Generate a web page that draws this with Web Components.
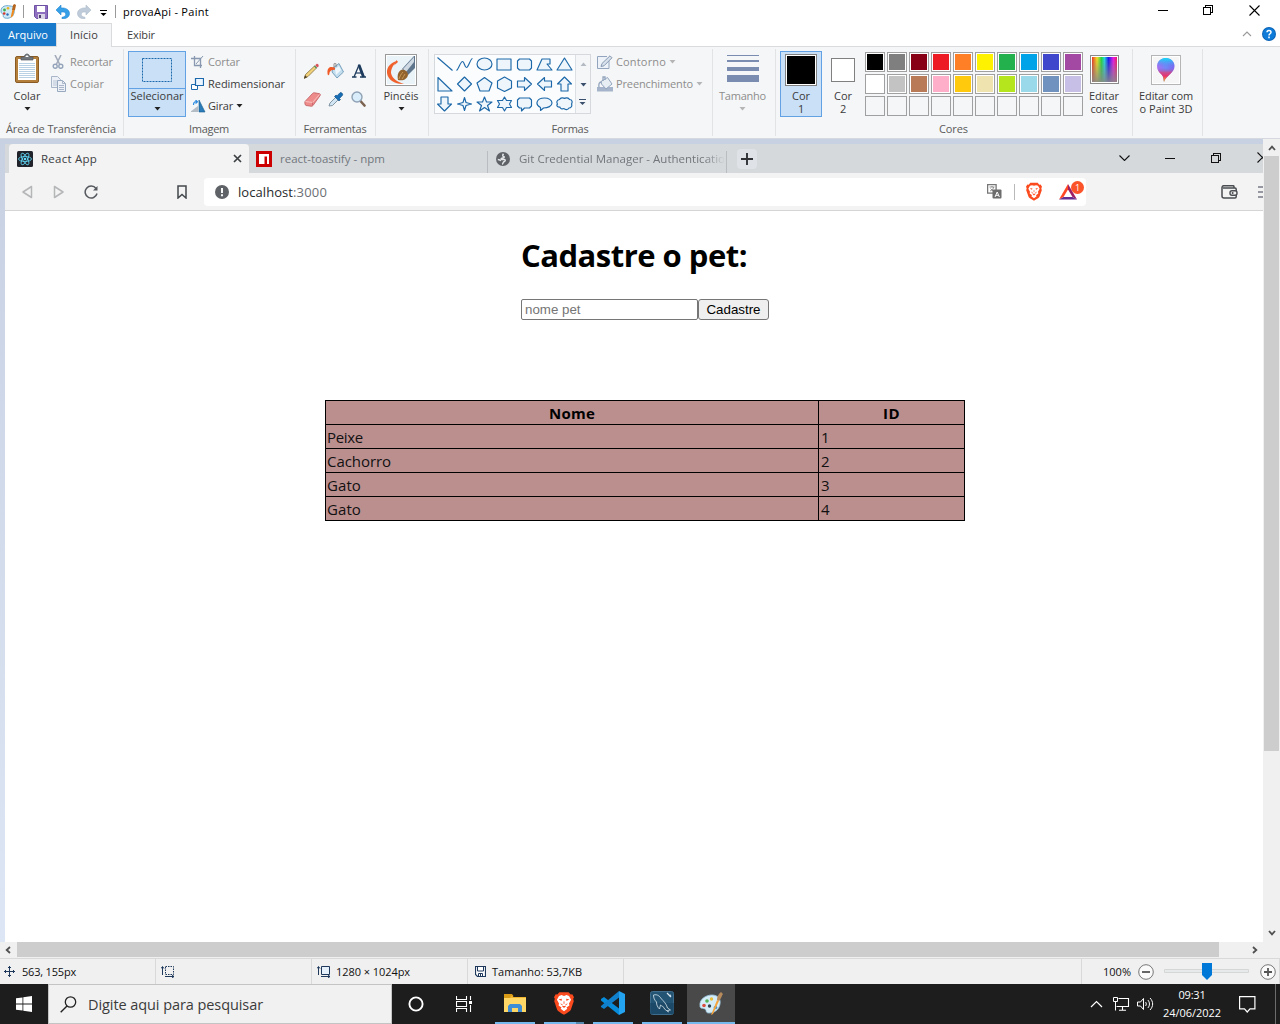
<!DOCTYPE html>
<html lang="pt-BR">
<head>
<meta charset="utf-8">
<title>provaApi - Paint</title>
<style>
html,body{margin:0;height:100%;overflow:hidden;background:#fff}
body{font-family:"Open Sans","Noto Sans",sans-serif;font-size:11px}
</style>
</head>
<body>
<paint-window></paint-window>
<script>
const ICONS = {
palette:[17,18,`<path d="M1 9C1 4 6 3 10 4c4 0 5 3 4 7-1 4-5 6-9 5-3-1-1-3-2-4-1 0-2-1-2-3z" fill="#cfe9f6" stroke="#5fa3c8" stroke-width=".9"/><circle cx="4.5" cy="8" r="1.4" fill="#3fae49"/><circle cx="8" cy="6.3" r="1.3" fill="#e8b21e"/><circle cx="4.2" cy="11.5" r="1.3" fill="#d83a2e"/><circle cx="7.5" cy="12.5" r="1.2" fill="#2f6db5"/><path d="M10.5 16 12.3 8h2.2L13 14z" fill="#f08a1d"/><path d="M12 8l1-5 1.500-1 1.500 1-1 5z" fill="#b5651d"/>`],
save:[14,14,`<path d="M.5.5h13v13H2.500l-2-2z" fill="#8f6fc0" stroke="#6d4fa3"/><path d="M3 1h8v6H3z" fill="#fff"/><path d="M4 9h7v5H4z" fill="#d8d4e6"/><path d="M5 10h2v3H5z" fill="#4d4070"/>`],
undo:[14,14,`<path d="M5 0v3C10 2.500 13.500 5 13.500 8.500c0 3.500-3.500 5.500-7.500 5.300v-1.500c2.500-.3 3.800-1.500 3.800-3.200C9.800 7.300 8 6.800 5 7V10L0 5z" fill="#35a0e8" stroke="#2587d0" stroke-width=".6"/>`],
redo:[14,14,`<path d="M9 0v3C4 2.500.5 5 .5 8.500c0 3.500 3.500 5.500 7.500 5.300v-1.500c-2.500-.3-3.800-1.500-3.800-3.200C4.200 7.300 6 6.800 9 7V10l5-5z" fill="#bfcbd9" stroke="#adbccd" stroke-width=".6"/>`],
custom:[8,8,`<path d="M0 1.500h7" stroke="currentColor"/><path d="M.5 4h6L3.500 7z" fill="currentColor"/>`],
min:[10,11,`<path d="M0 5.500h10" stroke="currentColor"/>`],
restore:[10,10,`<path d="M.5 2.500h7v7h-7zM2.500 2.500v-2h7v7h-2" fill="none" stroke="currentColor" shape-rendering="crispEdges"/>`],
close:[11,11,`<path d="M.5.5l10 10M10.500.5l-10 10" stroke="currentColor" stroke-width="1.1"/>`],
up:[10,6,`<path d="M1 5l4-4 4 4" fill="none" stroke="#999" stroke-width="1.1"/>`],
help:[14,14,`<circle cx="7" cy="7" r="7" fill="#0a63b5"/><circle cx="7" cy="7" r="6" fill="#0f7bd8"/><path d="M5 5.300C5 2.900 9 2.900 9 5.200 9 6.800 7 6.700 7 8.500M7 9.600v1.700" stroke="#fff" stroke-width="1.500" fill="none"/>`],
down:[7,4,`<path d="M.5 0h6L3.500 3.500z" fill="currentColor"/>`],
clip:[28,31,`<rect x="2.500" y="3.500" width="23" height="26" rx="1.500" fill="#b37f3b" stroke="#8a5c24"/><path d="M5 6h18v21H5z" fill="#fff"/><path d="M6 10.500h16M6 12.500h16M6 14.500h16M6 16.500h16M6 18.500h16M6 20.500h16M6 22.500h16M6 24.500h16" stroke="#b9d1e4"/><path d="M8 7V4h3c1-4 5-4 6 0h3v3z" fill="#70777c" stroke="#50575c" stroke-width=".7"/><path d="M12.500 4c0-2 3-2 3 0z" fill="#fff"/>`],
cut:[12,15,`<path d="M3 0l4.500 9M9 0L4.500 9" stroke="#a3acbb" stroke-width="1.600"/><circle cx="3.200" cy="11.300" r="2" fill="none" stroke="#93a3bb" stroke-width="1.400"/><circle cx="8.800" cy="11.300" r="2" fill="none" stroke="#93a3bb" stroke-width="1.400"/>`],
copy:[16,16,`<path d="M.5.5h6l3 3v8h-9z" fill="#edf1f7" stroke="#a9b6c9"/><path d="M2 5h5M2 7h5M2 9h5" stroke="#b9c5d6"/><path d="M6.500 4.500h5l3 3v8h-8z" fill="#edf1f7" stroke="#98a8bf"/><path d="M8 9.500h5M8 11.500h5M8 13.500h5M11.500 4.500v3h3" stroke="#a9b6c9" fill="none"/>`],
sel:[31,25,`<rect x=".5" y=".5" width="29" height="23" fill="none" stroke="#1b68ad" stroke-dasharray="2 1"/>`],
crop:[13,13,`<path d="M3.500 0v9.500H11M0 2.500h9.500V12" stroke="#8798b0" fill="none" stroke-width="1.300"/><path d="M5 8l7-8" stroke="#8798b0"/>`],
resize:[13,13,`<path d="M.5 6.500h6v5h-6z" fill="#fff" stroke="#1b68ad"/><path d="M4.500.5h8v7h-8z" fill="#eaf5ff" stroke="#1b68ad" stroke-width="1.200"/>`],
rotate:[16,13,`<path d="M-1 12h8V6z" fill="#b4bcc5"/><path d="M8 0v12h6z" fill="#2b7cb8" stroke="#165d91" stroke-width=".6"/><path d="M2.500 5c0-3 1.500-3.500 3-3.500M4.500 0L6.500 1.700 4.500 3.500" stroke="#2d8be0" fill="none" stroke-width="1.200"/>`],
pencil:[16,16,`<path d="M0 15.500l1.500-4L10.500 3l2 2-8.500 8.500z" fill="#f1d27b" stroke="#79602d" stroke-width=".7"/><path d="M0 15.500l1.200-3.200 1.900 2z" fill="#493c28"/><path d="M11.200 2.200l1.300-1.200c1-.6 2.800 1 2 2.200L13.200 4.500z" fill="#d9545a"/><path d="M10.300 2.900l2.300 2.300" stroke="#4b8f59" stroke-width="1.200"/>`],
fill:[17,16,`<path d="M6 5l6-4.500 4.500 8.500-6.500 6L5 9z" fill="#c1ddee" stroke="#6390b1" stroke-width=".8"/><path d="M8 6l4-3 2 4-5 5z" fill="#eef7fc"/><path d="M7 7V1c0-1 2-1 2 0v3" fill="none" stroke="#777" stroke-width=".8"/><path d="M8 5C4 3 0 4 .5 10c0 3 1.800 3 2 0C3 8 4 7 8 6.500z" fill="#f05b28"/>`],
textA:[14,14,`<path d="M0 13h4.500M8 13h6" stroke="#1e3c5e" stroke-width="1.500"/><path d="M2 13L7 1l5 12" stroke="#1e3c5e" stroke-width="1.300" fill="none"/><path d="M7 1l4.500 12" stroke="#1e3c5e" stroke-width="2.800"/><path d="M4 9h6" stroke="#1e3c5e" stroke-width="1.200"/>`],
eraser:[17,15,`<path d="M1 9.500L8.500 1.500c.5-.6 1-.8 2-.7l5 .9c1 .2 1 1.300.5 2L9 13.500c-.5.600-1 .8-2 .7l-5-.7c-1-.2-1.500-3-1-4z" fill="#ee8c8c" stroke="#c05c60" stroke-width=".8"/><path d="M1.500 9.500l7 1L15.500 2.500" fill="none" stroke="#f9c0be"/><path d="M8.500 10.500V13" stroke="#c05c60" stroke-width=".7"/>`],
picker:[16,15,`<path d="M1 14l1-3 6-6 2.500 2.500-6 6z" fill="#d2e5f2" stroke="#6b8193" stroke-width=".8"/><path d="M6.500 4.500l1.500-1.500 1 .8L12 .8c1-1 3.500 1 2.500 2.500L11.500 6.500l1 1L11 9z" fill="#176eb4" stroke="#0b4a81" stroke-width=".6"/>`],
lens:[15,16,`<path d="M9 9.500l4.500 5" stroke="#7b6350" stroke-width="2.600" stroke-linecap="round"/><circle cx="6" cy="6" r="5" fill="#d9edfa" stroke="#8fa2b6" stroke-width="1.400"/>`],
brush:[32,32,`<rect x=".5" y=".5" width="31" height="31" fill="#fff" stroke="#999"/><rect x="2" y="2" width="28" height="28" fill="#e9f3f8"/><path d="M12.500 7C6 8 1.500 13 2 19c1 7 8 11.500 17 11-6-2-12-5-13-11 0-5 3-9 6.500-12z" fill="#f0602b"/><path d="M9 11.500l4-3.500-1.500-2z" fill="#f0602b"/><path d="M17 15L29 2h1v12l-7 7z" fill="#5f758c"/><path d="M18 15L29 3v5l-8 10z" fill="#ced9e3"/><path d="M13 26c-1-5 0-8 3-10 4-1 7 2 7 5-1 4-4 6-10 5z" fill="#93632e"/><path d="M14 25c1-3 2-5 4-7M17 25c1-2 2-3 3-5" stroke="#c99956" fill="none"/>`],
outline:[17,14,`<path d="M12 6v7.500H.5V1.500H10" fill="#edf2f8" stroke="#93a5be"/><path d="M4 11.500l1-3L13 .8l2 2-8 8z" fill="#d7e0eb" stroke="#8799b2"/>`],
fillg:[17,16,`<path d="M0 11h16v4.500H0z" fill="#a5b4cb"/><path d="M4 5.500l6.500-4L15 8l-6 5-4.500-5z" fill="#e6edf3" stroke="#93a5be"/><path d="M6 5V1h2v3M4.500 6c-2.500 0-3 2-2.500 5.500" stroke="#93a5be" fill="none" stroke-width="1.300"/>`],
sizes:[32,28,`<path d="M0 0h32v1H0zM0 5h32v2H0zM0 12h32v4H0zM0 20h32v7H0z" fill="#7a8db0"/>`],
p3d:[30,30,`<defs><linearGradient id="p" x1="0" x2="1"><stop offset="0" stop-color="#b86af0"/><stop offset=".5" stop-color="#6e8cf8"/><stop offset="1" stop-color="#8463ee"/></linearGradient><linearGradient id="q" x1="0" y1="0" x2="0" y2="1"><stop offset="0" stop-color="#10e0f5"/><stop offset=".4" stop-color="#6675f5" stop-opacity=".1"/><stop offset=".6" stop-color="#d9417b" stop-opacity=".8"/><stop offset=".75" stop-color="#e9316b"/><stop offset="1" stop-color="#f8c01c"/></linearGradient></defs><rect x=".5" y=".5" width="29" height="29" fill="#f6f6f6" stroke="#b5b5b5"/><path d="M1.500 1.500h27v27h-27z" fill="none" stroke="#fff"/><path d="M15 3c5 0 8.500 4 8.500 8 0 7-8 9-10.500 16-1-4 0-5-3-8-7-6-4-16 5-16z" fill="url(#p)"/><path d="M15 3c5 0 8.500 4 8.500 8 0 7-8 9-10.500 16-1-4 0-5-3-8-7-6-4-16 5-16z" fill="url(#q)"/>`],
rainbow:[29,29,`<defs><linearGradient id="r"><stop offset="0" stop-color="#f03020"/><stop offset=".2" stop-color="#f4e020"/><stop offset=".38" stop-color="#20d840"/><stop offset=".5" stop-color="#20d8e0"/><stop offset=".66" stop-color="#1414f0"/><stop offset=".85" stop-color="#e818e8"/><stop offset="1" stop-color="#f01860"/></linearGradient><linearGradient id="g" x1="0" y1="0" x2="0" y2="1"><stop offset="0" stop-color="#888" stop-opacity="0"/><stop offset="1" stop-color="#888" stop-opacity=".9"/></linearGradient></defs><rect x=".5" y=".5" width="28" height="28" fill="#fff" stroke="#8a8a8a"/><path d="M2 2h25v25H2z" fill="url(#r)"/><path d="M2 2h25v25H2z" fill="url(#g)"/>`],
react:[16,16,`<rect width="16" height="16" rx="1.500" fill="#20232a"/><g fill="none" stroke="#61dafb" stroke-width=".8"><ellipse cx="8" cy="8" rx="6.500" ry="2.500"/><ellipse cx="8" cy="8" rx="6.500" ry="2.500" transform="rotate(60 8 8)"/><ellipse cx="8" cy="8" rx="6.500" ry="2.500" transform="rotate(120 8 8)"/></g><circle cx="8" cy="8" r="1.300" fill="#61dafb"/>`],
npm:[16,16,`<path d="M0 0h16v16H0z" fill="#c00"/><path d="M3 3h10v10h-2V5.500H8.500V13H3z" fill="#fff"/>`],
globe:[14,14,`<circle cx="7" cy="7" r="7" fill="#5f6368"/><path d="M7.500 1.800c-1 1.200-1 2.400 0 2.700 1.500.3.500 1.500-1 1.500-1.500.2-2 1.500-.5 1.500h2.500c1.500.5.500 2-1 2.500-.5 1-.5 2-1.500 2.200M1.800 7.500c1.500 0 2.500.5 3 1.500" fill="none" stroke="#e4e6e8" stroke-width="1.500"/>`],
tabx:[9,9,`<path d="M1 1l7 7M8 1L1 8" stroke="#3c4043" stroke-width="1.700"/>`],
plus:[12,12,`<path d="M6 0v12M0 6h12" stroke="#303236" stroke-width="1.900"/>`],
chev:[11,6,`<path d="M.5.5l5 5 5-5" fill="none" stroke="currentColor" stroke-width="1.100"/>`],
back:[11,14,`<path d="M9.500 1.500v11L1 7z" fill="none" stroke="#b4b6b8" stroke-width="1.500" stroke-linejoin="round"/>`],
fwd:[11,14,`<path d="M1.500 1.500v11L10 7z" fill="none" stroke="#b4b6b8" stroke-width="1.500" stroke-linejoin="round"/>`],
reload:[15,14,`<path d="M12 3.500A6 6 0 1 0 13 8.500" fill="none" stroke="#55595e" stroke-width="1.500"/><path d="M13.500 1v4.500H9z" fill="#55595e"/>`],
mark:[10,14,`<path d="M1 1h8v12L5 9.500 1 13z" fill="none" stroke="#44484c" stroke-width="1.500"/>`],
info:[14,14,`<circle cx="7" cy="7" r="7" fill="#5f6368"/><path d="M7 3v5M7 9.300v2" stroke="#fff" stroke-width="1.900"/>`],
trans:[15,15,`<rect x=".6" y=".6" width="8.500" height="8.500" fill="#fff" stroke="#777" stroke-width="1.300"/><path d="M2.500 3h5M5 2v1M3 7c3-1 3.500-3 3.500-4M3.500 4.500L6 7" stroke="#777" stroke-width=".8" fill="none"/><rect x="5.500" y="5.500" width="9" height="9" rx="1" fill="#6d6d6d"/><path d="M8 13l2.200-5 2.200 5M9 11.300h2.600" stroke="#fff" fill="none"/>`],
brave:[24,28,`<path d="M6.500 1h11l2.500 2.800 2-.3L24 7l-1 2 .7 3-3.500 10c-.5 1.600-5.500 4.500-8.200 6-2.700-1.500-7.700-4.400-8.200-6L.3 12 1 9 0 7l2-3.500 2 .3z" fill="#fb4a1d"/><path d="M12 5.500l3-1 3 1 2.500 4.500-2.500 4.500.5 2.500-3.500 2.500 1 1.500-4 3-4-3 1-1.500-3.500-2.500.5-2.500L3.500 10 6 5.500l3-1z" fill="#fff"/><path d="M9.500 9l-4 .5 3.500 2zM14.500 9l4 .5-3.500 2zM9.500 17.500h5L12 20z" fill="#fb4a1d"/><path d="M12 12v3M8 15l2.500 1.500M16 15l-2.500 1.500" stroke="#fb4a1d"/>`],
bat:[18,16,`<path d="M9 0L0 15.500 4.500 13 9 5.500z" fill="#ff4724"/><path d="M9 0v5.500l4.500 7.500 4.500 2.500z" fill="#9e1f63"/><path d="M0 15.500L4.500 13h9l4.500 2.500z" fill="#662d91"/>`],
wallet:[17,14,`<path d="M13 3V1.700c0-.6-.4-1-1-1H3C1.700.7 1 1.500 1 2.800V11c0 1.300.8 2 2 2h11c.8 0 1.200-.4 1.200-1.200V4.200c0-.8-.4-1.200-1.200-1.200H2" fill="none" stroke="#4a4d51" stroke-width="1.500"/><rect x="9" y="5.700" width="7" height="4.600" rx="2" fill="#f3f3f3" stroke="#4a4d51" stroke-width="1.400"/><circle cx="11.600" cy="8" r="1" fill="#4a4d51"/>`],
menu:[14,12,`<path d="M0 1h14M0 6h14M0 11h14" stroke="#777b86" stroke-width="1.600"/>`],
su:[8,6,`<path d="M1 5l3-3.300L7 5" fill="none" stroke="#505050" stroke-width="1.800"/>`],
sd:[8,6,`<path d="M1 1l3 3.300L7 1" fill="none" stroke="#505050" stroke-width="1.800"/>`],
sl:[6,8,`<path d="M5 1L1.700 4 5 7" fill="none" stroke="#505050" stroke-width="1.800"/>`],
sr:[6,8,`<path d="M1 1l3.300 3L1 7" fill="none" stroke="#505050" stroke-width="1.800"/>`],
move:[11,11,`<path d="M5.500 0v11M0 5.500h11M4 1.500h3M4 9.500h3M1.500 4v3M9.500 4v3" stroke="#1e395b"/>`],
selsize:[14,12,`<path d="M4.500.5h8v8h-8z" fill="none" stroke="#1e395b" stroke-dasharray="1.500 1"/><path d="M1.500 1v8M0 2.500L1.500.5 3 2.500M4 10.500h9M11 9l2 1.500-2 1.500" stroke="#1e395b" fill="none"/>`],
imgsize:[14,12,`<path d="M4.500.5h8v8h-8z" fill="#e6f1fb" stroke="#1e395b"/><path d="M1.500 1v8M0 2.500L1.500.5 3 2.500M4 10.500h9M11 9l2 1.500-2 1.500" stroke="#1e395b" fill="none"/>`],
disk:[11,11,`<path d="M.5.5h10v10h-8l-2-2z" fill="#fff" stroke="#1e395b" stroke-width="1.200"/><path d="M2.500 1v4h6V1M3.500 10V7.500h4V10M5.500 8v2" fill="none" stroke="#1e395b"/>`],
zoomout:[16,16,`<circle cx="8" cy="8" r="7.300" fill="#fafafa" stroke="#777"/><path d="M4 8h8" stroke="#555" stroke-width="1.800"/>`],
zoomin:[16,16,`<circle cx="8" cy="8" r="7.300" fill="#fafafa" stroke="#777"/><path d="M4 8h8M8 4v8" stroke="#555" stroke-width="1.800"/>`],
slider:[86,17,`<path d="M.5 6.500h84v3H.5z" fill="#e7eaea" stroke="#d6d6d6"/><path d="M38 0h10v12l-5 5-5-5z" fill="#0078d7"/>`],
win:[16,16,`<path d="M0 2.300L6.500 1.400v6.200H0zM7.300 1.300L16 0v7.600H7.300zM0 8.400h6.500v6.200L0 13.700zM7.300 8.400H16V16l-8.700-1.200z" fill="#fff"/>`],
search:[17,17,`<circle cx="10.500" cy="6" r="5.200" fill="none" stroke="#222" stroke-width="1.300"/><path d="M7 10L.7 16.300" stroke="#222" stroke-width="1.400"/>`],
cortana:[16,16,`<circle cx="8" cy="8" r="6.600" fill="none" stroke="#fff" stroke-width="1.900"/>`],
taskview:[17,16,`<path d="M.5 0v3.500h10V0M.5 16v-3.500h10V16M.5 5.500h10v5H.5zM14.500 0v4M14.500 9v7" fill="none" stroke="#fff" stroke-width="1.100"/><path d="M13 5h3v3h-3z" fill="#fff"/>`],
folder:[22,19,`<path d="M0 1h8l1.500 2H22v15H0z" fill="#f0b42f"/><path d="M0 0h8l1.500 2H7L6 4H0z" fill="#d99a16"/><path d="M0 4h22v14H0z" fill="#ffd767"/><path d="M4 18v-6l2-2h10l2 2v6h-4v-4H8v4z" fill="#3c8cd6"/>`],
vscode:[24,24,`<path d="M0 8l3-2 15 11.500V24L0 9.500z" fill="#078cdc"/><path d="M18 0v6.500L3 18l-3-2v-1z" fill="#1180cc"/><path d="M18 0l6 3v18l-6 3z" fill="#24a3f0"/>`],
mysql:[24,24,`<rect x=".5" y=".5" width="23" height="23" rx="2" fill="#245474" stroke="#3e6c8c"/><path d="M0 12h24v11H0z" fill="#17425f" opacity=".6"/><path d="M3.500 4c4-1 6 1 8 4 2 2 5 5 6 9l3 2-3 .5 1 1.500-4-3c0-2-3-3-4-4l-1 4c-2-2-3-4-3-7-2-2-3-4-3-7z" fill="none" stroke="#d8e6ef" stroke-width=".8"/><path d="M17 2l4 4M19 5l2-1" stroke="#d8e6ef" stroke-width="1.200"/>`],
paintbig:[24,24,`<path d="M1 15C0 8 7 4 13 4c6 0 9 4 8 9-1 6-6 9-11 9-4 0-2-3-4-4s-5 0-5-3z" fill="#d4ecf8" stroke="#9dc8df" stroke-width=".8"/><circle cx="5" cy="14.500" r="1.800" fill="#d84c40"/><circle cx="8" cy="10" r="1.800" fill="#52b056"/><circle cx="12.500" cy="8" r="1.700" fill="#e9bf3b"/><circle cx="10.500" cy="15" r="1.700" fill="#33424f"/><circle cx="16.500" cy="16.500" r="1.800" fill="#4291cf"/><path d="M12 24l6-15 2 1-6 13z" fill="#f4a43b"/><path d="M18 9c0-3 1-6 4-8l2 2c-1 1-2 5-4 7z" fill="#b78a5c"/>`],
tchev:[13,8,`<path d="M1 7l5.500-5.500L12 7" fill="none" stroke="#fff" stroke-width="1.200"/>`],
net:[17,14,`<path d="M5.500 1.500h10v8h-12M9.500 10v3M6 13.200h7" fill="none" stroke="#fff" stroke-width="1.100"/><path d="M.5.5h4v4h-4zM2.500 4.500v9" fill="#1d1d1d" stroke="#fff"/>`],
sound:[17,14,`<path d="M.5 5h3l3-3.500v11L3.500 9h-3z" fill="none" stroke="#fff"/><path d="M8.500 5c1 1 1 3 0 4M10.800 3c2.200 2.200 2.200 5.800 0 8M13 1c3.500 3.500 3.500 8.500 0 12" fill="none" stroke="#fff"/>`],
notif:[17,17,`<path d="M.6.6h15.300v12.300H11L8.200 16 5.500 12.900H.6z" fill="none" stroke="#fff" stroke-width="1.200"/>`]
};
const SHAPES = [
'M1 1l15 13','M0 14c2-1 4-9 6-9s2 6 4 6 4-9 6-9','M8 1.500c4 0 7.500 2.500 7.500 6s-3.500 6-7.500 6S.5 11 .5 7.500 4 1.500 8 1.500z','M.5 2.500h14v11H.5z','M3 2.500h10l2 2v7l-2 2H3l-2-2v-7z','M5.500 2.500h8v5h-3l5 6H.5z','M8 1.500l7.500 12H.5z',
'M1.500 1v13.500h14z','M8 .5l7 7-7 7-7-7z','M8 1l7.500 5.500-3 8H3.500l-3-8z','M8 .5l7 4v7l-7 3.500-7-3.500v-7z','M1 4.500h7V1l7 6.500L8 14v-3.500H1z','M15 4.500H8V1L1 7.500 8 14v-3.500h7z','M8 .5l7 7h-3.500v7h-7v-7H1z',
'M8 14.500l7-7h-3.500v-7h-7v7H1z','M8 1l1.500 5L15 7.500 9.500 9 8 14 6.500 9 1 7.500 6.500 6z','M8 .5l2 5h5.500L11 9l2 5.500-5-3.500-5 3.500L5 9 .5 5.500H6z','M8 .5L10 4h5l-2 3.500 2 3.500h-5l-2 3.500L6 11H1l2-3.500L1 4h5z','M3 1.500h10l2 2v6l-2 2H8l-3 3v-3H3l-2-2v-6z','M8 1.500c4 0 7.500 2 7.500 5s-4 5-8.500 5l-3 2.500v-3C-2 8 0 1.500 8 1.500z','M3 3c1-2 4-2 5-1 1-1 4-1 5 1 3 0 3 3 2 4.500 1 2-.5 4-2.500 4-1 2-4 2-5 .5-2 1-4 0-4-1.500C0 11 0 8.500 1 7.500 0 6 0 3.500 3 3z'];

function define(name, css, html, init) {
  customElements.define(name, class extends HTMLElement {
    connectedCallback() {
      if (this.shadowRoot) return;
      const t = document.createElement('template');
      const body = typeof html === 'function' ? html(this) : html;
      t.innerHTML = `<style>:host{display:block;box-sizing:border-box;flex:none}*{box-sizing:border-box}.r{display:flex;align-items:center}.c{display:flex;flex-direction:column;align-items:center}.s{flex:1}${css}</style>${body}`;
      this.attachShadow({mode:'open'}).appendChild(t.content.cloneNode(true));
      if (init) init(this);
    }
  });
}
const ic = (n, m = '') => `<ui-icon name="${n}" style="margin:${m || 0}"></ui-icon>`;
const tx = (s, w, m = '', extra = '') => `<fit-text w="${w}" style="margin:${m || 0};${extra}">${s}</fit-text>`;

define('paint-window', `:host{width:1280px;height:1024px;display:flex;flex-direction:column}`,
`<title-bar></title-bar><ribbon-tabs></ribbon-tabs><ribbon-bar></ribbon-bar><paint-canvas></paint-canvas><h-scroll></h-scroll><status-bar></status-bar><task-bar></task-bar>`);

define('title-bar', `:host{height:23px;background:#fff;color:#000}.r{height:23px}i{width:1px;height:13px;background:#9a9a9a}`,
`<div class="r">${ic('palette','0 0 1px')}<i style="margin:0 10px 0 6px"></i>${ic('save')}${ic('undo','0 0 0 8px')}${ic('redo','0 0 0 7px')}${ic('custom','2px 0 0 9px')}<i style="margin:0 7px 0 7px"></i>${tx('provaApi - Paint',86,'0 0 1px')}<span class="s"></span>${ic('min','0 35px 2px 0')}${ic('restore','0 36px 3px 0')}${ic('close','0 20px 3px 0')}</div>`);

define('ribbon-tabs', `:host{height:24px;border-bottom:1px solid #dadbdc;background:#fff;color:#3b3b3b}.r{height:23px}.f{width:56px;background:#1979ca;color:#fff}.a{width:56px;height:24px;background:#f5f6f7;border:1px solid #dadbdc;border-bottom:0;align-self:flex-start}`,
`<div class="r"><div class="r f">${tx('Arquivo',40,'0 0 0 8px')}</div><div class="r a">${tx('Início',28,'0 0 2px 13px')}</div>${tx('Exibir',28,'0 0 0 15px')}<span class="s"></span>${ic('up','0 10px 2px 0')}${ic('help','0 4px 1px 0')}</div>`);

define('ribbon-group', `:host{display:flex;flex-direction:column;height:91px}.b{height:75px;display:flex;align-items:flex-start;padding-top:4px}.l{height:14px;line-height:14px;display:flex;justify-content:center;color:#5a5a5a;padding-right:2px}:host{background:linear-gradient(#e2e3e4,#e2e3e4) right 2px/1px 87px no-repeat}`,
e=>`<div class="b"><slot></slot></div><div class="l">${e.getAttribute('label')?tx(e.getAttribute('label'),e.getAttribute('lw')):''}</div>`,
e=>{e.style.width=e.getAttribute('w')+'px'});

define('big-button', `:host{display:flex;flex-direction:column;align-items:center;height:66px;color:#3b3b3b;border:1px solid transparent}:host([on]){background:#c9e0f7;border-color:#62a2e4}.i{height:37px;display:flex;justify-content:center;align-items:flex-start;width:100%}:host([split]) .i{border-bottom:1px solid #62a2e4}.t{line-height:13px;display:flex;flex-direction:column;align-items:center;margin-top:0}.d{margin-top:5px;color:var(--arrow,#222)}`,
e=>`<div class="i"><slot></slot></div><div class="t">${e.getAttribute('text').split('|').map((s,i)=>tx(s,e.getAttribute('tw').split('|')[i])).join('')}</div>${e.hasAttribute('menu')?`<div class="d">${ic('down')}</div>`:''}`);

define('small-button', `:host{display:flex;align-items:center;height:22px;color:#3b3b3b}:host([off]){color:#8d8d8d}.i{display:flex;align-items:center}.d{margin-left:3px;margin-bottom:1px;color:#222}:host([off]) .d{color:#b5b5b5}`,
e=>`<div class="i" style="width:${e.getAttribute('iw')}px">${ic(e.getAttribute('icon'))}</div>${tx(e.getAttribute('text'),e.getAttribute('tw'),'0 0 2px')}${e.hasAttribute('menu')?`<div class="d">${ic('down')}</div>`:''}`);

define('shape-gallery', `:host{display:flex;width:157px;height:60px;border:1px solid #d5d8dd;background:#fbfcfd}.g{display:grid;grid-template-columns:repeat(7,20px);grid-auto-rows:20px;width:141px;padding-left:0;height:58px}svg{display:block;margin:1px 0 0 1px}.b{border-left:1px solid #dcdfe3;width:15px;background:#f5f6f7;display:flex;flex-direction:column;align-items:center;color:#3a506e}`,
`<div class="g">${SHAPES.map(d=>`<svg width="18" height="17" viewBox="-.5 -.5 18 17"><path d="${d}" fill="${d.endsWith('z')?'#eef6fc':'none'}" stroke="#1d68a8" stroke-width="1.150" stroke-linejoin="round"/></svg>`).join('')}</div><div class="b"><span style="color:#b4bac3;transform:scaleY(-1);margin-top:7px">${ic('down')}</span>${ic('down','17px 0 0')}${ic('custom','11px 0 0')}</div>`);

define('color-swatch', `:host{width:var(--s,20px);height:var(--s,20px);border:1px solid #a0a0a0;padding:1px;background:#fff}:host([empty]){background:#f5f6f7}:host([big]){border-color:#808080}div{height:100%}`,
e=>`<div style="background:${e.getAttribute('color')||'transparent'}"></div>`);

define('color-grid', `:host{display:grid;grid-template-columns:repeat(10,20px);gap:2px}`,
()=>['#000000','#7f7f7f','#880015','#ed1c24','#ff7f27','#fff200','#22b14c','#00a2e8','#3f48cc','#a349a4','#ffffff','#c3c3c3','#b97a57','#ffaec9','#ffc90e','#efe4b0','#b5e61d','#99d9ea','#7092be','#c8bfe7'].map(c=>`<color-swatch color="${c}"></color-swatch>`).join('')+'<color-swatch empty></color-swatch>'.repeat(10));

define('ribbon-bar', `:host{display:flex;height:92px;background:#f5f6f7;border-bottom:1px solid #d5d9df}.tools{display:grid;grid-template-columns:24px 23px 23px;grid-template-rows:28px 28px;align-items:center;justify-items:center;margin:6px 0 0 4px}.off{--arrow:#b5b5b5;color:#8d8d8d}`,
`<ribbon-group w="124" label="Área de Transferência" lw="110">
<big-button text="Colar" tw="27" menu style="width:44px;margin-left:5px">${ic('clip','1px 0 0')}</big-button>
<div><small-button off icon="cut" iw="18" text="Recortar" tw="43" style="margin-left:3px"></small-button><small-button off icon="copy" iw="19" text="Copiar" tw="34" style="margin-left:2px"></small-button></div>
</ribbon-group>
<ribbon-group w="172" label="Imagem" lw="40">
<big-button on split text="Selecionar" tw="53" menu style="width:58px;margin-left:4px">${ic('sel','6px 0 0')}</big-button>
<div style="margin-left:5px"><small-button off icon="crop" iw="17" text="Cortar" tw="32"></small-button><small-button icon="resize" iw="17" text="Redimensionar" tw="77"></small-button><small-button icon="rotate" iw="17" text="Girar" tw="25" menu></small-button></div>
</ribbon-group>
<ribbon-group w="80" label="Ferramentas" lw="63"><div class="tools">${['pencil','fill','textA','eraser','picker','lens'].map(n=>ic(n)).join('')}</div></ribbon-group>
<ribbon-group w="53"><big-button text="Pincéis" tw="35" menu style="width:48px;margin-left:1px">${ic('brush','2px 0 0')}</big-button></ribbon-group>
<ribbon-group w="284" label="Formas" lw="37"><shape-gallery style="margin:3px 0 0 5px"></shape-gallery><div style="margin-left:6px"><small-button off icon="outline" iw="19" text="Contorno" tw="50" menu></small-button><small-button off icon="fillg" iw="19" text="Preenchimento" tw="77" menu></small-button></div></ribbon-group>
<ribbon-group w="63"><big-button class="off" text="Tamanho" tw="47" menu style="width:59px;color:#8d8d8d">${ic('sizes','3px 0 0 1px')}</big-button></ribbon-group>
<ribbon-group w="357" label="Cores" lw="29">
<big-button on text="Cor|1" tw="18|6" style="width:42px;margin-left:4px"><color-swatch big color="#000" style="--s:32px;margin-top:2px"></color-swatch></big-button>
<big-button text="Cor|2" tw="18|6" style="width:42px"><color-swatch big color="#fff" style="--s:24px;margin-top:6px"></color-swatch></big-button>
<color-grid style="margin:1px 0 0 1px"></color-grid>
<big-button text="Editar|cores" tw="30|27" style="width:42px">${ic('rainbow','3px 0 0')}</big-button>
</ribbon-group>
<ribbon-group w="70"><big-button text="Editar com|o Paint 3D" tw="54|53" style="width:66px">${ic('p3d','3px 0 0')}</big-button></ribbon-group>`);

define('paint-canvas', `:host{display:flex;height:803px;background:linear-gradient(#c8d1e2,#dce6f4)}.m{width:1258px;height:798px;margin:5px 1px 0 5px;overflow:hidden;background:#fff}`,
`<div class="m"><browser-tabs></browser-tabs><browser-bar></browser-bar><pet-page></pet-page></div><v-scroll></v-scroll>`);

define('v-scroll', `:host{display:flex;flex-direction:column;align-items:center;width:17px;margin-left:-1px;height:803px;background:#f0f0f0}.t{width:15px;height:595px;background:#cdcdcd}`,
`${ic('su','6px 0 5px')}<div class="t"></div><span class="s"></span>${ic('sd','0 0 6px')}`);
define('h-scroll', `:host{display:flex;align-items:center;height:16px;background:#f0f0f0}.t{width:1202px;height:15px;background:#cdcdcd;margin-bottom:1px}`,
`${ic('sl','0 6px 1px 5px')}<div class="t"></div><span class="s"></span>${ic('sr','0 22px 1px 0')}`);

define('browser-tab', `:host{display:flex;align-items:center;height:29px;color:#72777c;font-size:11.500px}:host([on]){background:#f3f3f3;border-radius:4px 4px 0 0;color:#3c4043}.fade{overflow:hidden;-webkit-mask:linear-gradient(90deg,#000 90%,transparent)}`,
e=>`${ic(e.getAttribute('icon'),e.hasAttribute('fade')?'0 9px 0 0':'0 8px 0 0')}<div class="${e.hasAttribute('fade')?'fade':''}">${tx(e.getAttribute('text'),e.getAttribute('tw'))}</div><slot></slot>`);

define('browser-tabs', `:host{display:flex;align-items:center;height:29px;background:#d5d9dc;color:#222;overflow:hidden}i{width:1px;height:22px;background:#b9bdc1;align-self:flex-end}.p{width:20px;height:20px;border-radius:4px;background:#dfe2e6;display:flex;align-items:center;justify-content:center;margin-left:10px}.w{display:flex;align-items:center;color:#111}`,
`<browser-tab on icon="react" text="React App" tw="56" style="width:240px;margin-left:4px;padding-left:8px"><span style="flex:1"></span>${ic('tabx','0 7px 0 0')}</browser-tab>
<browser-tab icon="npm" text="react-toastify - npm" tw="105" style="width:238px;padding-left:7px"></browser-tab><i></i>
<browser-tab fade icon="globe" text="Git Credential Manager - Authenticatio" tw="206" style="width:238px;padding-left:8px"></browser-tab><i></i>
<div class="p">${ic('plus')}</div><span class="s"></span><div class="w" style="margin-right:-5px">${ic('chev','0 35px 2px 0')}${ic('min','0 36px 0 0')}${ic('restore','0 36px 2px 0')}${ic('close','0 0 2px')}</div>`);

define('browser-bar', `:host{display:flex;align-items:center;height:38px;background:#f3f3f3;border-bottom:1px solid #d4d5d6;overflow:hidden}.a{width:882px;height:28px;border-radius:4px;background:#fff;display:flex;align-items:center;margin-left:17px;color:#27292c;font-size:13px}i{width:1px;height:16px;background:#b9b9b9;margin:0 11px 0 12px}.g{position:relative;margin-right:9px}.n{position:absolute;left:12px;top:-3px;width:13px;height:13px;border-radius:50%;background:#fb542b;color:#fff;font:9px/13px "Open Sans",sans-serif;text-align:center}`,
`${ic('back','0 0 0 17px')}${ic('fwd','0 0 0 20px')}${ic('reload','0 0 0 20px')}${ic('mark','0 0 0 78px')}<div class="a">${ic('info','0 9px 0 11px')}${tx('localhost',55)}${tx(':3000',34,'','color:#6b6f74')}<span class="s"></span>${ic('trans')}<i></i><ui-icon name="brave" width="16" height="19"></ui-icon><span style="width:17px"></span><div class="g">${ic('bat')}<span class="n">1</span></div></div><span class="s"></span>${ic('wallet','0 20px 0 0')}${ic('menu','0 -9px 0 0')}`);

define('pet-page', `:host{display:flex;flex-direction:column;height:730px;background:#fff;color:#000}h1{margin:23px 0 0 516px;font-size:31px;line-height:42px;height:42px;font-weight:700}.f{display:flex;margin:23px 0 0 516px}input{width:177px;height:21px;margin:0;border:1px solid #767676;border-radius:2px;padding:1px 3px;font:13.330px "Liberation Sans",sans-serif}input::placeholder{color:#757575}button{width:71px;height:21px;margin:0;padding:0;border:1px solid #767676;border-radius:3px;background:#efefef;font:13.330px "Liberation Sans",sans-serif;color:#000}table{width:640px;margin:80px 0 0 320px;border-collapse:collapse;table-layout:fixed;background:#bc8f8f;font-size:15px;line-height:20px}td,th{border:1px solid #000;padding:1px 1px 1px 1px;height:24px}td+td{padding-left:2px}td{color:#111}`,
`<h1>${tx('Cadastre o pet:',226)}</h1><div class="f"><input placeholder="nome pet"><button>Cadastre</button></div>
<table><colgroup><col style="width:493px"><col style="width:146px"></colgroup><tr><th>${tx('Nome',46,'0 auto')}</th><th>${tx('ID',17,'0 auto')}</th></tr>${[['Peixe',36,1],['Cachorro',64,2],['Gato',34,3],['Gato',34,4]].map(r=>`<tr><td>${tx(r[0],r[1])}</td><td>${r[2]}</td></tr>`).join('')}</table>`);

define('status-bar', `:host{display:flex;height:26px;border-top:1px solid #d9d9d9;background:#f0f0f0;color:#111}.p{display:flex;align-items:center;height:25px;border-right:1px solid #d9d9d9}`,
`<div class="p" style="width:156px">${ic('move','0 7px 0 4px')}${tx('563, 155px',54)}</div><div class="p" style="width:156px">${ic('selsize','0 0 0 5px')}</div><div class="p" style="width:156px">${ic('imgsize','0 5px 0 5px')}${tx('1280 × 1024px',74)}</div><div class="p" style="width:156px">${ic('disk','0 6px 0 7px')}${tx('Tamanho: 53,7KB',90)}</div><div class="p" style="width:458px"></div><div class="p" style="width:198px">${tx('100%',28,'0 7px 0 21px')}${ic('zoomout')}${ic('slider','0 10px 0 10px')}${ic('zoomin')}</div>`);

define('task-item', `:host{display:flex;align-items:center;justify-content:center;width:40px;height:40px;margin-right:9px;border-bottom:2px solid #76b9ed}:host([stack]){border-image:linear-gradient(90deg,#76b9ed 31px,#5688ae 31px) 2}:host([on]){width:48px;background:#494949;margin:0 0 0 -4px}`,`<slot></slot>`);

define('task-bar', `:host{display:flex;align-items:center;height:40px;background:#1d1d1d;color:#fff}.q{width:344px;height:40px;background:#f1f1f1;border:1px solid #c4c4c4;display:flex;align-items:center;color:#3b3b3b;font-size:14.500px}.t{display:flex;flex-direction:column;align-items:center;line-height:18px;width:60px;margin:-1px 0 0 8px}i{width:1px;height:40px;background:#6c6c6c;margin:0 4px 0 19px}`,
`${ic('win','0 16px 0 16px')}<div class="q">${ic('search','0 11px 0 11px')}${tx('Digite aqui para pesquisar',175)}</div>${ic('cortana','0 0 0 16px')}${ic('taskview','0 0 0 32px')}<span style="width:22px"></span>
<task-item>${ic('folder')}</task-item><task-item stack><ui-icon name="brave" width="20" height="24"></ui-icon></task-item><task-item>${ic('vscode')}</task-item><task-item>${ic('mysql')}</task-item><task-item on>${ic('paintbig')}</task-item>
<span class="s"></span>${ic('tchev')}${ic('net','0 0 0 10px')}${ic('sound','0 0 0 7px')}<div class="t">${tx('09:31',27)}${tx('24/06/2022',58)}</div>${ic('notif','0 0 0 17px')}<i></i>`);

define('ui-icon', `svg{display:block}`, e=>{
  const [w,h,p]=ICONS[e.getAttribute('name')];
  return `<svg width="${e.getAttribute('width')||w}" height="${e.getAttribute('height')||h}" viewBox="0 0 ${w} ${h}">${p}</svg>`;
});

/* Text run whose tracking is adjusted so that it fills a given width. */
define('fit-text', `:host{white-space:nowrap}span{display:inline-block}`, `<span><slot></slot></span>`, e=>{
  const w=+e.getAttribute('w'), s=e.shadowRoot.querySelector('span');
  e.style.width=w+'px';
  s.style.letterSpacing=((w-s.getBoundingClientRect().width)/e.textContent.length)+'px';
});
</script>
</body>
</html>
